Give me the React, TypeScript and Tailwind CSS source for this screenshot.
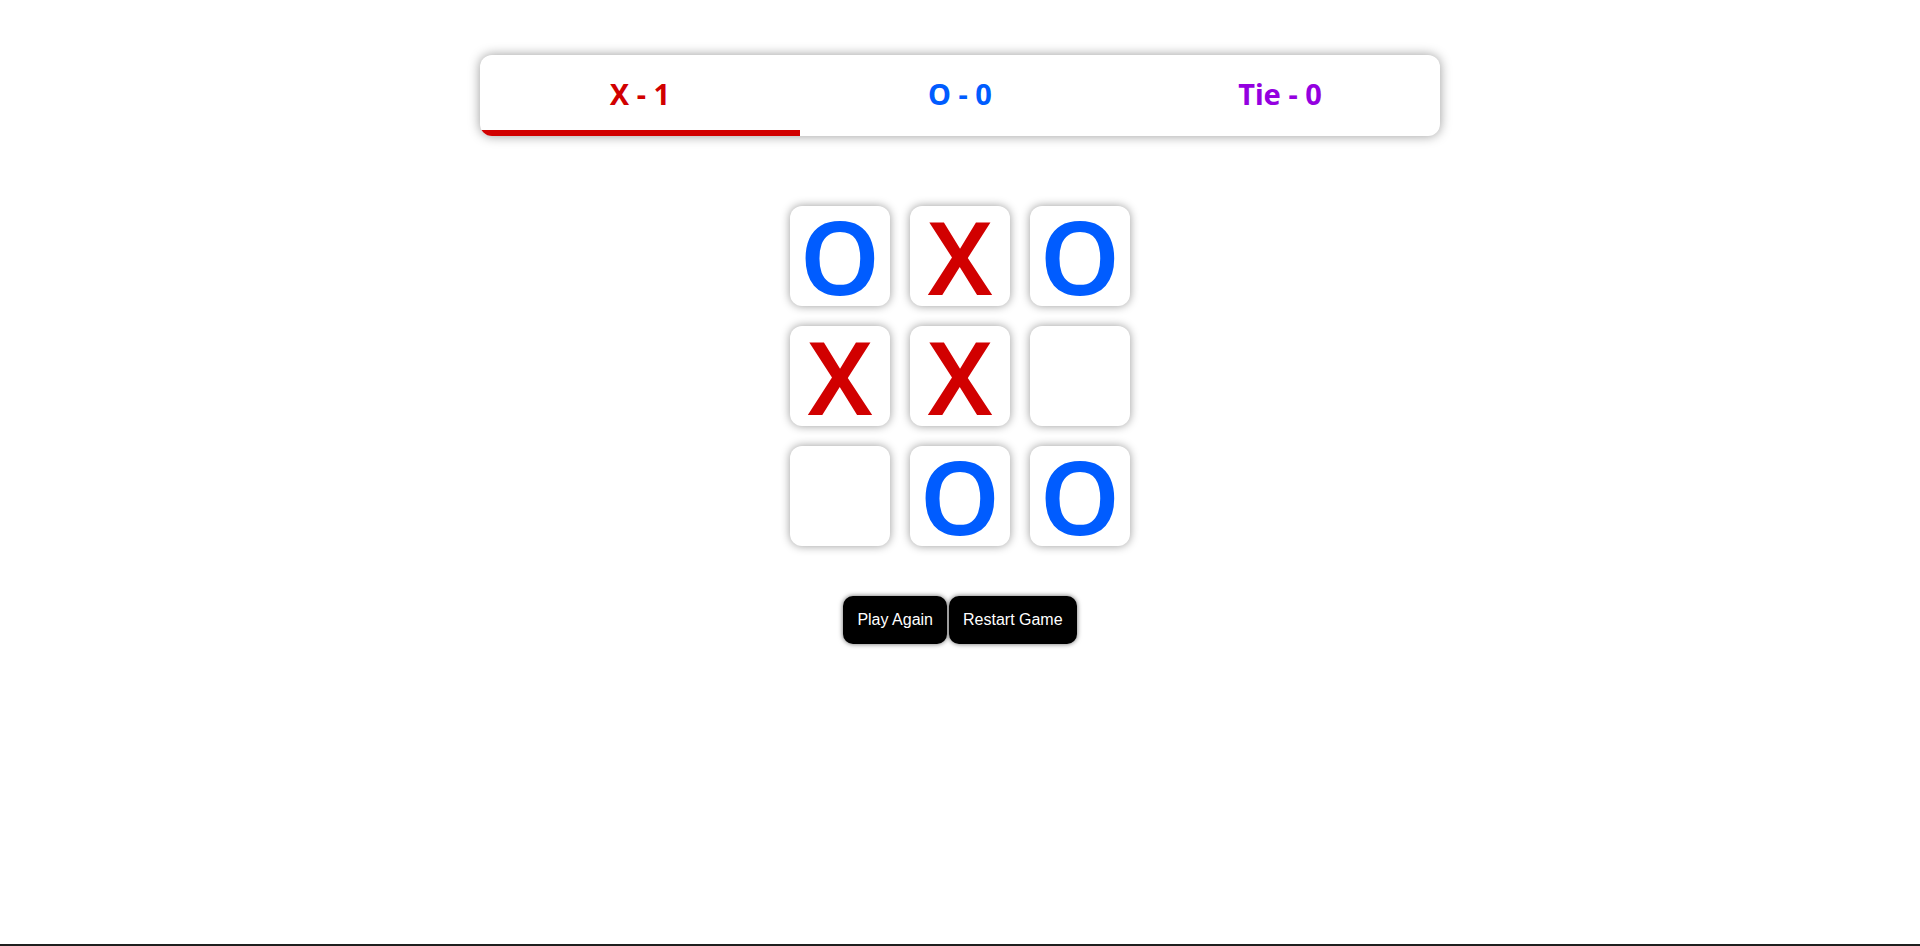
import React from "react";

type Mark = "X" | "O" | "";

const board: Mark[] = ["O", "X", "O", "X", "X", "", "", "O", "O"];

export default function App() {
  return (
    <div className="flex min-h-screen flex-col bg-white font-['Noto_Sans',sans-serif]">
      <div className="flex flex-1 flex-col items-center pt-[55px]">
        {/* placar */}
        <div className="flex w-[960px] overflow-hidden rounded-[12px] bg-white shadow-[0_0_12px_rgba(0,0,0,0.4)]">
          <div className="flex h-[81px] flex-1 items-center justify-center border-b-[6px] border-[#d10000] pt-[2px] text-[29px] font-bold text-[#d10000]">
            X - 1
          </div>
          <div className="flex h-[81px] flex-1 items-center justify-center pb-[4px] text-[29px] font-bold text-[#005cff]">
            O - 0
          </div>
          <div className="flex h-[81px] flex-1 items-center justify-center pb-[4px] text-[29px] font-bold text-[#9400e0]">
            Tie - 0
          </div>
        </div>

        {/* tabuleiro */}
        <div className="mt-[70px] grid grid-cols-[100px_100px_100px] gap-[20px]">
          {board.map((m, i) => (
            <div
              key={i}
              className="flex h-[100px] w-[100px] items-center justify-center rounded-[12px] bg-white shadow-[0_0_10px_rgba(0,0,0,0.4)]"
            >
              {m && (
                <span
                  className={
                    "text-[102px] leading-[100px] font-semibold " +
                    (m === "X" ? "text-[#d10000]" : "text-[#005cff]")
                  }
                >
                  {m}
                </span>
              )}
            </div>
          ))}
        </div>

        {/* botões */}
        <div className="mt-[50px] flex gap-[2px] font-['Liberation_Sans',Arial,sans-serif]">
          <button className="h-[48px] rounded-[10px] bg-black px-[14px] text-[16px] text-white shadow-[0_0_5px_rgba(0,0,0,0.6)]">
            Play Again
          </button>
          <button className="h-[48px] rounded-[10px] bg-black px-[14px] text-[16px] text-white shadow-[0_0_5px_rgba(0,0,0,0.6)]">
            Restart Game
          </button>
        </div>
      </div>
      <div className="h-[2px] bg-[#1f1f1f]" />
    </div>
  );
}
